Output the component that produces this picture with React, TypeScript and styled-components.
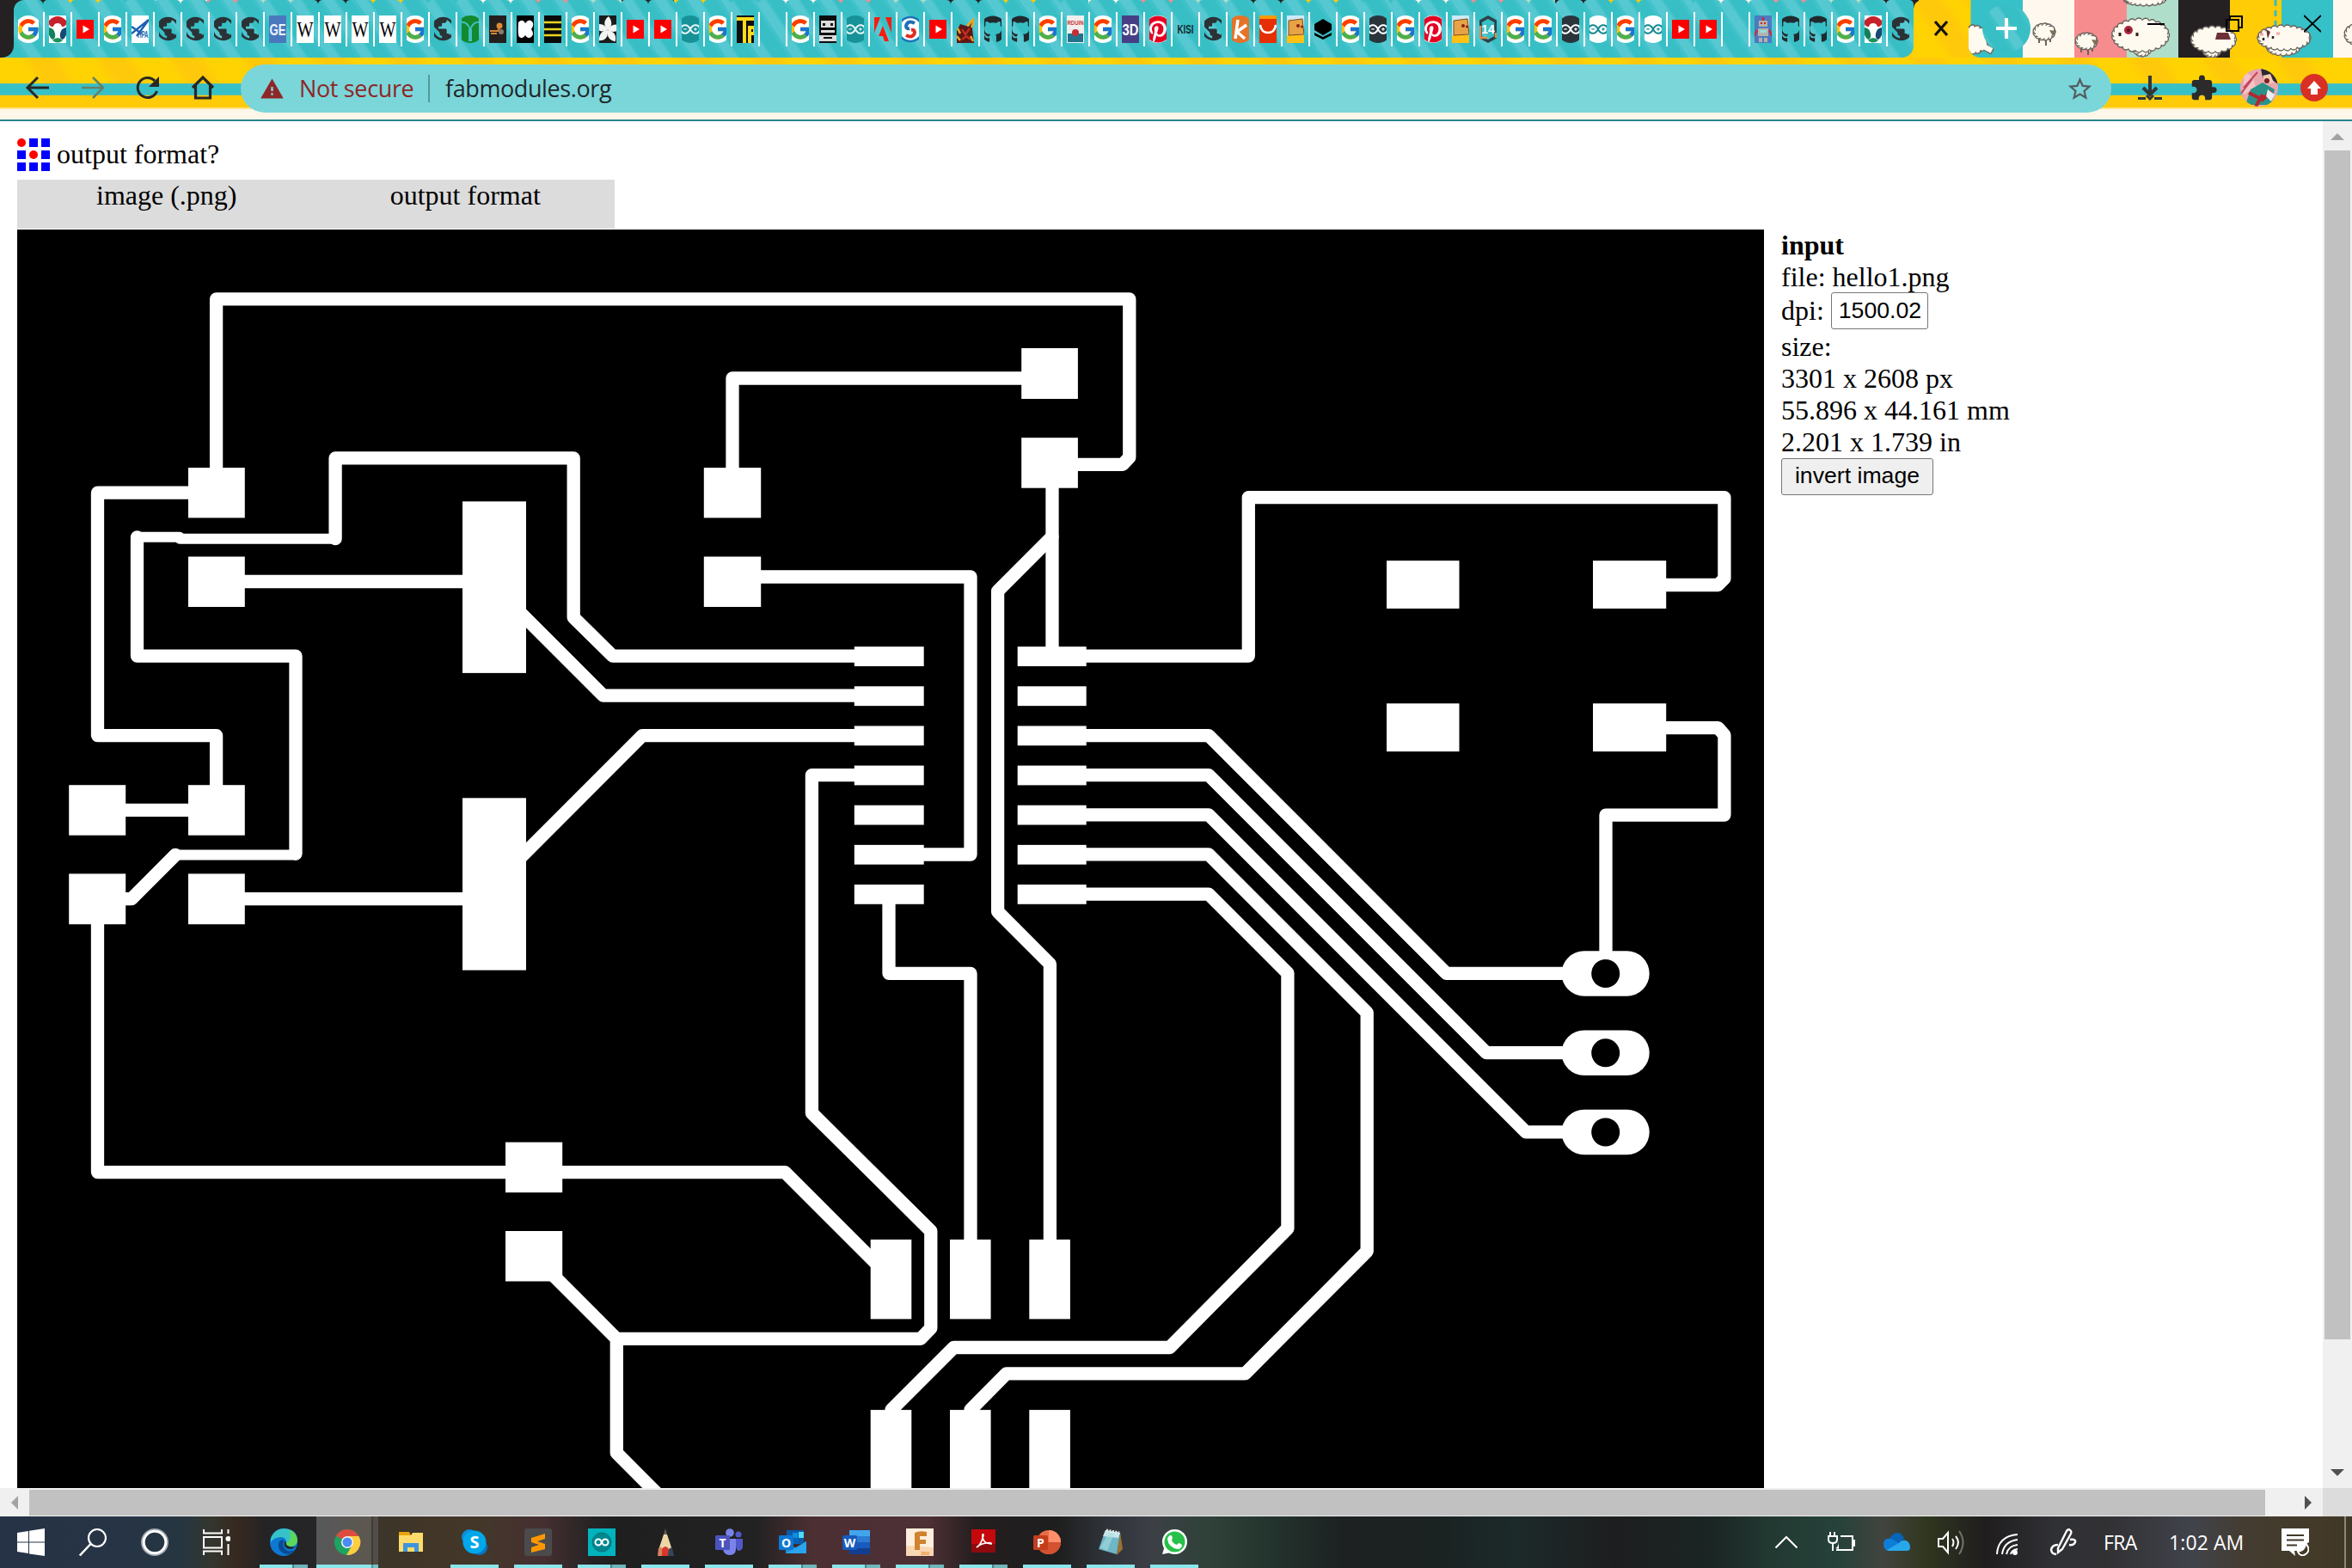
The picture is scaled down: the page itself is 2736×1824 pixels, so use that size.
import React from "react";
import styled, { createGlobalStyle, css } from "styled-components";
import { FcGoogle } from "react-icons/fc";
import { FaGithub, FaPinterest } from "react-icons/fa";
import { MdPublic, MdExtension, MdWarning, MdStarBorder } from "react-icons/md";
import { SiArduino } from "react-icons/si";

const SERIF = '"Liberation Serif", "Times New Roman", serif';
const SANS = '"Liberation Sans", Arial, sans-serif';
const UI = '"Open Sans", "Noto Sans", sans-serif';

const Global = createGlobalStyle`
  html, body { margin: 0; padding: 0; overflow: hidden; background: #fff; }
  * { box-sizing: border-box; }
  svg { display: block; flex: none; }
`;

const tealStripes = css`
  background-color: #3bc1c8;
  background-image: repeating-linear-gradient(
    56deg,
    #37bfc5 0 14px,
    #3fc2c9 16px 18px,
    #56c8d1 20px 29px,
    #45c3ca 31px 32px
  );
  background-attachment: fixed;
`;

const yellowStripes = css`
  background-color: #ffcf04;
  background-image: repeating-linear-gradient(56deg, #ffc90b 0 18px, #ffd302 30px 58px, #ffc90b 70px);
  background-attachment: fixed;
`;

const Screen = styled.div`
  width: 2736px;
  height: 1824px;
  display: flex;
  flex-direction: column;
  overflow: hidden;
`;

/* ---------- browser tab strip ---------- */

const TabStrip = styled.div`
  display: flex;
  height: 67px;
  flex: none;
  background: repeating-linear-gradient(
    90deg,
    #36c0c7 0 60.3px,
    #fef8ef 60.3px 120.6px,
    #f78c8f 120.6px 181px,
    #afdfcb 181px 241.3px,
    #252022 241.3px 301.6px,
    #ffcc05 301.6px 362px
  );
  background-position: -242px 0;
  background-size: 3200px 100%;
`;

const StripEdge = styled.div`
  width: 16px;
  flex: none;
  ${tealStripes}
`;

const StripEdgeShade = styled.div`
  height: 67px;
  background: #252022;
  border-radius: 0 0 14px 0;
`;

const Tab = styled.div<{ $first?: boolean; $last?: boolean }>`
  width: ${(p) => (p.$first ? 34 : 32)}px;
  height: 67px;
  flex: none;
  display: flex;
  align-items: center;
  gap: 5px;
  padding-left: ${(p) => (p.$first ? 5 : 0)}px;
  border-radius: ${(p) => (p.$first ? "12px" : "5px")} 5px ${(p) => (p.$last ? "14px" : "0")} 0;
  ${tealStripes}
`;

const LastTabBacking = styled.div`
  flex: none;
  background: linear-gradient(180deg, transparent 40px, #ffcd07 40px);
`;

const IconClip = styled.div<{ $wide?: boolean }>`
  width: ${(p) => (p.$wide ? 24 : 20)}px;
  height: 32px;
  display: flex;
  justify-content: center;
  overflow: hidden;
`;

const TabGap = styled.div`
  width: 2px;
  height: 40px;
  background: #fff;
`;

const ActiveTab = styled.div`
  width: 64px;
  flex: none;
  height: 67px;
  border-radius: 10px 14px 0 0;
  display: flex;
  align-items: center;
  justify-content: center;
  ${yellowStripes}
`;

const StripRest = styled.div`
  flex: 1;
  position: relative;
  background: #ffcf04;
`;

const ThemeArt = styled.div`
  height: 67px;
  overflow: hidden;
  border-radius: 0 0 0 14px;
  background: linear-gradient(
    90deg,
    #36c0c7 0 63px,
    #fef8ef 63px 123px,
    #f78c8f 123px 184px,
    #afdfcb 184px 244px,
    #252022 244px 304px,
    #ffcc05 304px 364px,
    #36c0c7 364px 424px,
    #fef8ef 424px
  );
`;

const NewTab = styled.div`
  position: absolute;
  left: 16px;
  top: 5px;
  width: 56px;
  height: 56px;
  border-radius: 50%;
  display: flex;
  align-items: center;
  justify-content: center;
  ${tealStripes}
`;

const WindowButtons = styled.div`
  position: absolute;
  right: 36px;
  top: 15px;
  display: flex;
  gap: 71px;
`;

/* ---------- toolbar ---------- */

const Toolbar = styled.div`
  height: 74px;
  flex: none;
  display: flex;
  align-items: center;
  border-bottom: 2px solid #2b858c;
  background:
    linear-gradient(
      180deg,
      transparent 30px,
      #58bdae 30px 31px,
      #38c0c7 31px 43px,
      #6fbf94 43px 44px,
      #ffcb08 44px 58px,
      #ffe38a 58px 60px,
      #fef6e9 60px
    ),
    repeating-linear-gradient(56deg, #ffc90b 0 18px, #ffd302 30px 58px, #ffc90b 70px);
`;

const NavGroup = styled.div`
  display: flex;
  width: 280px;
  flex: none;
  padding: 0 0 2px 28px;
  gap: 32px;
`;

const AddressBar = styled.div`
  width: 2176px;
  height: 56px;
  flex: none;
  border-radius: 28px;
  background: #7bd6d9;
  display: flex;
  align-items: center;
  padding: 0 20px 0 22px;
  font: 27px/56px ${UI};
  color: #20272b;
`;

const NotSecure = styled.span`
  color: #8f2627;
  width: 134px;
  margin-left: 17px;
  letter-spacing: -0.35px;
  white-space: nowrap;
`;

const Divider = styled.span`
  width: 2px;
  height: 32px;
  margin: 0 18px 0 16px;
  background: #57989b;
`;

const Host = styled.span`
  flex: 1;
  letter-spacing: -0.4px;
`;

const Actions = styled.div`
  display: flex;
  align-items: center;
  gap: 26px;
  padding: 0 0 2px 30px;
`;

const DownloadIcon = styled.svg`
  margin-right: 5px;
`;

/* ---------- page ---------- */

const Viewport = styled.div`
  display: grid;
  grid-template: 1590px 33px / 2702px 34px;
  flex: none;
`;

const Page = styled.main`
  overflow: hidden;
  padding: 20px 0 0 20px;
  font: 32px/37px ${SERIF};
  color: #000;
  background: #fff;
`;

const Heading = styled.div`
  display: flex;
  align-items: center;
  gap: 8px;
  height: 38px;
`;

const HeadingText = styled.span`
  padding-bottom: 1px;
`;

const MenuRow = styled.div`
  display: flex;
  width: 695px;
  height: 57px;
  margin-top: 10px;
  background: #dcdcdc;
`;

const MenuCell = styled.div`
  flex: 1;
  text-align: center;
  line-height: 36px;
`;

const Work = styled.div`
  display: flex;
  gap: 20px;
  padding-top: 1px;
`;

const Panel = styled.div`
  white-space: nowrap;
`;

const Line = styled.div`
  height: 37px;
`;

const DpiLine = styled.div`
  display: flex;
  align-items: center;
  gap: 8px;
  height: 43px;
  margin: -1px 0 2px;
`;

const DpiInput = styled.input`
  width: 113px;
  height: 43px;
  border: 1.5px solid #767676;
  border-radius: 3px;
  padding: 0 0 0 8px;
  font: 26.67px ${SANS};
  color: #000;
  background: #fff;
`;

const InvertButton = styled.button`
  display: block;
  width: 177px;
  height: 43px;
  border: 1.5px solid #767676;
  border-radius: 3px;
  padding: 0 0 2px;
  font: 26.67px ${SANS};
  color: #000;
  background: #efefef;
`;

const VScroll = styled.div`
  display: flex;
  flex-direction: column;
  align-items: center;
  background: #f0f0f0;
`;

const VThumb = styled.div`
  width: 30px;
  height: 1383px;
  background: #c1c1c1;
`;

const VEnd = styled.div<{ $h: number; $pad: number }>`
  height: ${(p) => p.$h}px;
  padding-top: ${(p) => p.$pad}px;
`;

const HScroll = styled.div`
  display: flex;
  align-items: center;
  background: #f0f0f0;
`;

const HThumb = styled.div`
  width: 2601px;
  height: 30px;
  background: #c1c1c1;
`;

const HEnd = styled.div<{ $w: number; $pad: number }>`
  width: ${(p) => p.$w}px;
  padding-left: ${(p) => p.$pad}px;
`;

const Corner = styled.div`
  background: #dcdcdc;
`;

/* ---------- taskbar ---------- */

const Taskbar = styled.footer`
  height: 60px;
  flex: none;
  display: flex;
  background: linear-gradient(
    90deg,
    #263346 0, #263445 150px, #263640 212px, #34362f 245px, #36291f 275px, #242325 310px, #252527 365px,
    #3c3529 440px, #413628 500px, #43372a 560px, #462f31 630px, #262324 690px, #1f1f1f 720px, #222222 880px,
    #4c2f33 945px, #4d3035 1080px, #241e1f 1135px, #1e1e1e 1230px, #30343a 1290px, #3c4046 1340px,
    #2e4138 1410px, #23332d 1480px, #1d2122 1560px, #1b2222 1680px, #1c2a2a 1760px, #1d1e1f 1880px, #1b2524 1990px,
    #223932 2060px, #26423a 2140px, #42443f 2190px, #30371f 2240px, #1f1d1e 2310px, #303135 2390px,
    #313134 2450px, #41434b 2550px, #443c31 2610px, #433a28 2700px, #3e3726 2736px
  );
`;

const SysButton = styled.div`
  width: 72px;
  height: 60px;
  flex: none;
  display: flex;
  align-items: center;
  justify-content: center;
`;

const AppButton = styled.div<{ $run?: "one" | "many"; $active?: boolean; $gap?: number }>`
  width: ${(p) => (p.$active ? 72 : 56)}px;
  height: 60px;
  margin-left: ${(p) => p.$gap ?? 18}px;
  display: flex;
  flex-direction: column;
  align-items: center;
  padding-top: 14px;
  gap: 10px;
  flex: none;
  background: ${(p) =>
    p.$active ? "linear-gradient(90deg, #57585a 0, #5d574f 64px, #3f3b38 64px 66px, #524d47 66px)" : "none"};
  &::after {
    content: "";
    width: 100%;
    height: 4px;
    background: ${(p) =>
      p.$run === "many"
        ? p.$active
          ? "linear-gradient(90deg, #8ae6ea 64px, #5c9295 64px 66px, #76c3c7 66px)"
          : "linear-gradient(90deg, #8ae6ea 38px, #4e8083 38px 40px, #6fb5b9 40px)"
        : p.$run === "one"
          ? "#8ae6ea"
          : "transparent"};
  }
`;

const Tray = styled.div`
  margin-left: auto;
  display: flex;
  align-items: center;
  color: #fff;
  font: 23px/60px ${UI};
  white-space: nowrap;
`;

const TraySlot = styled.div<{ $w: number }>`
  width: ${(p) => p.$w}px;
  display: flex;
  justify-content: center;
`;

const TrayText = styled.div<{ $w: number; $sp: number; $lead?: number }>`
  width: ${(p) => p.$w}px;
  margin-left: ${(p) => p.$lead ?? 0}px;
  letter-spacing: ${(p) => p.$sp}px;
`;

const DesktopEdge = styled.div`
  width: 9px;
  height: 60px;
  margin-left: 41px;
  border-left: 2px solid #8b8676;
`;

/* ---------- favicons ---------- */

const Glyph = ({ children }: { children?: React.ReactNode }) => (
  <svg width="32" height="32" viewBox="0 0 32 32">{children}</svg>
);

const IconStack = styled.div<{ $bg: string; $round?: boolean }>`
  width: 32px;
  height: 32px;
  flex: none;
  display: flex;
  align-items: center;
  justify-content: center;
  background: ${(p) => p.$bg};
  border-radius: ${(p) => (p.$round ? "50%" : "0")};
`;

const Letters = ({ bg, fg, size, text, serif, y = 23 }: { bg: string; fg: string; size: number; text: string; serif?: boolean; y?: number }) => (
  <Glyph>
    <rect width="32" height="32" fill={bg} />
    <text
      x="6.500"
      y={y}
      textLength="19"
      lengthAdjust="spacingAndGlyphs"
      fontSize={size}
      fontWeight={serif ? 400 : 700}
      fontFamily={serif ? SERIF : SANS}
      fill={fg}
    >
      {text}
    </text>
  </Glyph>
);

const favicons: Record<string, () => React.ReactElement> = {
  google: () => <IconStack $bg="#fff" $round><FcGoogle size={28} /></IconStack>,
  globe: () => <IconStack $bg="transparent"><MdPublic size={33} color="#2a3236" /></IconStack>,
  github: () => <IconStack $bg="transparent"><FaGithub size={32} color="#20292e" /></IconStack>,
  pin: () => <IconStack $bg="#fff" $round><FaPinterest size={32} color="#e60023" /></IconStack>,
  arduino: () => <IconStack $bg="#179299" $round><SiArduino size={24} color="#e9f6f6" /></IconStack>,
  arduinoDark: () => <IconStack $bg="#2a353b" $round><SiArduino size={24} color="#fff" /></IconStack>,
  arduinoWhite: () => <IconStack $bg="#fff" $round><SiArduino size={24} color="#14888f" /></IconStack>,
  youtube: () => (
    <Glyph>
      <rect x="1" y="5" width="30" height="22" rx="2" fill="#f00" />
      <path d="M13.500 11.500 21 16l-7.500 4.500z" fill="#fff" />
    </Glyph>
  ),
  fab: () => (
    <Glyph>
      <rect width="32" height="32" fill="#fff" />
      <path d="M5 7Q16-5 27 7 26 13 21 13 20 9 16 9 12 9 11 13 6 13 5 7Z" fill="#c8202b" />
      <path d="M6 14q6 1 7 7 1 6-3 7-6-4-4-14z" fill="#12805b" />
      <path d="M26 14q-6 1-7 7-1 6 3 7 6-4 4-14z" fill="#164a73" />
      <path d="M10 29q6-6 12 0-6 5-12 0z" fill="#19945f" />
    </Glyph>
  ),
  hpa: () => (
    <Glyph>
      <rect width="32" height="32" fill="#fff" />
      <path d="M6 21 26 5 12 24M6 13l12 8" stroke="#1e5fb4" strokeWidth="2.500" fill="none" />
      <text x="13" y="26" textLength="12.500" lengthAdjust="spacingAndGlyphs" fontSize="11" fontWeight="700" fontFamily={SANS} fill="#2265ad">HPA</text>
    </Glyph>
  ),
  ge: () => <Letters bg="#4a78bd" fg="#eef4ff" size={18} text="GE" />,
  wiki: () => <Letters bg="#fff" fg="#000" size={26} text="W" serif y={25} />,
  vine: () => (
    <Glyph>
      <circle cx="16" cy="16" r="16" fill="#12892e" />
      <path d="M4 8q9-2 12 9 3-11 12-9M15 16v14M17 16v14" stroke="#41bfc0" strokeWidth="2" fill="none" />
    </Glyph>
  ),
  ember: () => (
    <Glyph>
      <rect width="32" height="32" fill="#241f1e" />
      <path d="M7 18h9l3-5M8 21h7" stroke="#d88631" strokeWidth="2" fill="none" />
      <circle cx="18" cy="12" r="3.500" fill="#d98a35" />
      <circle cx="20" cy="19" r="3" fill="#8a7a72" />
    </Glyph>
  ),
  kick: () => (
    <Glyph>
      <rect width="32" height="32" fill="#000" />
      <path d="M8 8q5-5 8 1 4-6 8-2 3 4-1 9 4 6 0 9-4 3-7-2-3 5-7 2-2-2-1-17z" fill="#fff" />
    </Glyph>
  ),
  lines: () => (
    <Glyph>
      <rect width="32" height="32" fill="#0a0a0a" />
      <path d="M0 8h32M0 16h32M0 23h32" stroke="#ecd51f" strokeWidth="2.500" />
    </Glyph>
  ),
  flower: () => (
    <Glyph>
      <rect width="32" height="32" fill="#1b1b1b" />
      {[0, 72, 144, 216, 288].map((a) => (
        <path key={a} d="M16 17Q8 8 17 1 24 10 16 17z" fill="#f4f4f4" transform={`rotate(${a} 16 17)`} />
      ))}
    </Glyph>
  ),
  tr: () => (
    <Glyph>
      <rect width="32" height="32" fill="#0d0d0d" />
      <path d="M6 4h22M15 4v28M21 32V14h6v7h-6" stroke="#ffd91a" strokeWidth="4" fill="none" />
    </Glyph>
  ),
  blank: () => <Glyph />,
  mono: () => (
    <Glyph>
      <rect width="32" height="32" fill="#0d0d0d" />
      <path d="M8 6h16v8H8zM8 17h16v3H8zM6 23h20v7H6z" fill="#dcdcdc" />
      <path d="M10 9h3v3h-3zM19 9h3v3h-3zM11 25h10v2H11z" fill="#111" />
    </Glyph>
  ),
  adobe: () => (
    <Glyph>
      <path d="M3 2h10L3 28zM19 2h10v26zM16 12l7 18h-5l-2-6h-5z" fill="#fa1b0f" />
    </Glyph>
  ),
  cycle: () => (
    <Glyph>
      <circle cx="16" cy="16" r="14" fill="#fff" stroke="#1a75b8" strokeWidth="2.500" />
      <path d="M21 9q-8-4-10 3 0 4 4 3" fill="none" stroke="#1d6fb3" strokeWidth="4" />
      <path d="M11 23q8 4 10-3 0-4-4-3" fill="none" stroke="#e22b20" strokeWidth="4" />
    </Glyph>
  ),
  warrior: () => (
    <Glyph>
      <path d="M6 32V18l4-8 10 3 7-10-3 12 2 17z" fill="#5d1715" />
      <path d="M18 12 27 3l-4 11M6 24l4 5M22 24l3 6M7 15l3 6" stroke="#f0a51d" strokeWidth="2.500" fill="none" />
      <path d="M12 16l4 6 5-7M12 28l5-4 5 4" stroke="#c22b1d" strokeWidth="2.500" fill="none" />
    </Glyph>
  ),
  book: () => (
    <Glyph>
      <rect width="32" height="32" fill="#f1efed" />
      <text x="6.500" y="11" textLength="19" lengthAdjust="spacingAndGlyphs" fontSize="8" fontWeight="700" fontFamily={SANS} fill="#cb3434">RDUIN</text>
      <path d="M7 21h18v10H7z" fill="#22728c" />
      <circle cx="16" cy="20" r="4" fill="#c52d35" />
    </Glyph>
  ),
  threeD: () => <Letters bg="#473f86" fg="#fff" size={19} text="3D" />,
  kisi: () => <Letters bg="transparent" fg="#15272b" size={14} text="KISI" y={21} />,
  keen: () => (
    <Glyph>
      <circle cx="16" cy="16" r="16" fill="#e5732a" />
      <path d="M13 5 10 27M23 11 12 19l9 8" stroke="#fff" strokeWidth="3.500" fill="none" />
    </Glyph>
  ),
  cart: () => (
    <Glyph>
      <rect width="32" height="32" fill="#e62e04" />
      <rect width="32" height="4" fill="#ff9a00" />
      <path d="M7 11q1 9 9 9t9-9" stroke="#fff" strokeWidth="2.500" fill="none" />
    </Glyph>
  ),
  box: () => (
    <Glyph>
      <rect width="32" height="32" fill="#cfe9f6" />
      <path d="M6 23h20v9H6z" fill="#ffc013" />
      <path d="M8 6 24 4l2 18-18 1z" fill="#e8a347" stroke="#7a4a17" />
      <circle cx="19" cy="12" r="2" fill="#8b1e14" /><circle cx="23.500" cy="13" r="1.500" fill="#8b1e14" />
    </Glyph>
  ),
  layers: () => (
    <Glyph>
      <path d="m16 4 10 6v7l-10 6-10-6v-7z" fill="#000" />
      <path d="m6 20 10 5 10-5v3l-10 5-10-5z" fill="#000" />
    </Glyph>
  ),
  fourteen: () => (
    <Glyph>
      <path d="m16 2 9 5v18l-9 5-9-5V7z" fill="none" stroke="#2c4248" strokeWidth="3.500" />
      <path d="M7 12v14h8M25 20v6" stroke="#e38b48" strokeWidth="2.500" fill="none" />
      <text x="16" y="21" textAnchor="middle" fontSize="14" fontWeight="700" fontFamily={SANS} fill="#fff">14</text>
    </Glyph>
  ),
  robot: () => (
    <Glyph>
      <rect width="32" height="32" fill="#4c7bc0" />
      <path d="M16 2v5M9 17l-4 8M23 17l4 8" stroke="#cf2742" strokeWidth="2.500" />
      <path d="M11 6h10v7H11zM10 15h12v9H10zM11 26h4v5h-4zM17 26h4v5h-4z" fill="#b6b1ab" />
      <path d="M13 8h2v2h-2zM17 8h2v2h-2z" fill="#c22" /><path d="M12 17h8v3h-8z" fill="#8fe0dd" />
    </Glyph>
  ),
};

const tabs = (
  "google fab youtube google hpa globe globe globe globe ge wiki wiki wiki wiki google globe vine ember kick lines " +
  "google flower youtube youtube arduino google tr blank google mono arduino adobe cycle youtube warrior github github " +
  "google book google threeD pin kisi globe keen cart box layers google arduinoDark google pin box fourteen google google " +
  "arduinoDark arduinoWhite google arduinoWhite youtube youtube blank robot github github google fab globe"
).split(" ");

/* ---------- theme sheep ---------- */

const Sheep = ({ x, y, w, h, face }: { x: number; y: number; w: number; h: number; face?: React.ReactNode }) => {
  const n = Math.round(w / 4) + 6;
  const puffs = Array.from({ length: n }, (_, i) => {
    const a = (i / n) * Math.PI * 2;
    return [x + Math.cos(a) * (w / 2 - 4), y + Math.sin(a) * (h / 2 - 4)];
  });
  return (
    <g>
      {puffs.map(([cx, cy], i) => <circle key={i} cx={cx} cy={cy} r="4" fill="#fefaf0" stroke="#6b645d" strokeWidth="1.500" />)}
      <ellipse cx={x} cy={y} rx={w / 2 - 2.500} ry={h / 2 - 2.500} fill="#fefaf0" />
      {face}
    </g>
  );
};

const SheepArt = () => (
  <svg width="446" height="67" viewBox="2290 0 446 67">
    <path d="M2290 0h2.500v67h-2.500z" fill="#ffcf04" />
    <path d="M2647 0v34" stroke="#38bcc0" strokeWidth="3" strokeDasharray="7 5" />
    <path d="M2300 50l18 10" stroke="#6b645d" strokeWidth="8" />
    <Sheep x={2296} y={46} w={34} h={34} />
    <path d="M2300 50l17 9" stroke="#fefaf0" strokeWidth="6" />
    {[[2378, 39], [2427, 50]].map(([x, y]) => (
      <g key={x}>
        <path d={`M${x - 6} ${y + 5}v6M${x + 2} ${y + 5}v9M${x + 7} ${y + 4}v6`} stroke="#6b645d" strokeWidth="2" />
        <Sheep x={x} y={y - 2} w={26} h={20} face={<path d={`M${x + 6} ${y - 4}l8 1-4 6z`} fill="#7c6d58" />} />
      </g>
    ))}
    <Sheep x={2495} y={-2} w={50} h={18} />
    <Sheep x={2492} y={56} w={22} h={20} />
    <Sheep x={2490} y={41} w={67} h={40} face={<><path d="M2485 52h14v6h-14z" fill="#fefaf0" /><circle cx="2476" cy="35" r="5" fill="#a92639" /><circle cx="2476" cy="35" r="2" fill="#541420" /><path d="M2466 38v4M2486 38v4" stroke="#322" strokeWidth="3" /></>} />
    <Sheep x={2573} y={58} w={22} h={18} />
    <Sheep x={2575} y={46} w={53} h={32} face={<><path d="M2564 50h18v8h-18z" fill="#fefaf0" /><path d="M2579 38h13l3 8h-18z" fill="#6e3038" /></>} />
    <Sheep x={2656} y={54} w={40} h={22} />
    <Sheep x={2657} y={44} w={62} h={30} face={<><path d="M2640 46h32v8h-32z" fill="#fefaf0" /><path d="M2636 34l5 3-3 8z" fill="#6e3038" /><path d="M2629 40h4M2648 39h4" stroke="#f6a6a4" strokeWidth="3" /><path d="M2633 44v3M2644 42v3" stroke="#322" strokeWidth="2.500" /></>} />
    <Sheep x={2740} y={40} w={26} h={24} />
  </svg>
);

/* ---------- circuit board traces ---------- */

type Box = [number, number, number, number];

const pads: Box[] = [
  [219, 544.1, 65.8, 58.3], [219, 647.5, 65.8, 58.5], [818.8, 544.1, 66.4, 58.3], [818.8, 647.5, 66.4, 58.5],
  [538, 583.3, 74, 199.6], [538, 928.3, 74, 200.3],
  [80.2, 913.2, 66, 58.5], [219, 913.2, 65.8, 58.5], [80.2, 1016.4, 66, 58.8], [219, 1016.4, 65.8, 58.8],
  [588, 1328.7, 66.2, 58.5], [588, 1432, 66.2, 58.5],
  [1188.2, 405, 65.7, 59], [1188.2, 509.2, 65.7, 58.5],
  [1613, 652.2, 84.5, 55.7], [1853, 652.2, 85.2, 55.7], [1613, 818.3, 84.5, 55.9], [1853, 818.3, 85.2, 55.9],
  ...[1012.7, 1105, 1197.3].flatMap((x): Box[] => [[x, 1441.9, 47.6, 92.5], [x, 1640.1, 47.6, 100]]),
  ...[0, 1, 2, 3, 4, 5, 6].flatMap((i): Box[] => [
    [993.8, 752.2 + 46.13 * i, 80.9, 22.8],
    [1183.7, 752.2 + 46.13 * i, 80, 22.8],
  ]),
];

const traces = [
  "251.6,560 251.6,347.8 1313.8,347.8 1313.8,532 1306,540.3 1240,540.3",
  "230,573.1 113.5,573.1 113.5,855.6 251.6,855.6 251.6,930",
  "390.1,626.7 390.1,532.8 667.2,532.8 667.2,718.3 712.8,763.1 1000,763.1",
  "159.5,624.8 159.5,763.1 344,763.1 344,993",
  "204,994.5 153,1045.7 130,1045.7",
  "270,676.5 560,676.5",
  "130,942.4 240,942.4",
  "270,1045.7 560,1045.7",
  "852,560 852,440 1200,440",
  "870,671 1129,671 1129,994 1060,994",
  "595,702.4 701.7,809.1 1000,809.1",
  "600,1003 747.2,855.6 1000,855.6",
  "1000,901.6 944.4,901.6 944.4,1294.7 1082.8,1432 1082.8,1545 1071,1557.3 717.3,1557.3",
  "635,1475 717.3,1557.3 717.3,1690.2 790,1763",
  "113.5,1060 113.5,1363.6 913.1,1363.6 1027,1477.5",
  "1034,1040 1034,1132.3 1129,1132.3 1129,1450",
  "1224,560 1224,760",
  "1224,624.2 1160.6,687.6 1160.6,1060.5 1221.4,1121.3 1221.4,1450",
  "1250,763.1 1452.3,763.1 1452.3,578.6 2005.9,578.6 2005.9,673 1998.5,680.5 1930,680.5",
  "1930,846.6 1998.5,846.6 2005.9,855 2005.9,948.1 1868,948.1 1868,1115",
  "1250,855.6 1406,855.6 1682.6,1132.3 1830,1132.3",
  "1250,901.7 1406,901.7 1729,1224.7 1830,1224.7",
  "1250,947.8 1406,947.8 1775,1316.9 1830,1316.9",
  "1250,993.9 1406,993.9 1590.2,1178 1590.2,1455.5 1448.4,1597.9 1170.7,1597.9 1129,1640",
  "1250,1040.1 1406,1040.1 1497.9,1132 1497.9,1429 1360.6,1567.5 1109.5,1567.5 1037,1640",
];

const Board = () => (
  <svg width="2032" height="1464" viewBox="20 267 2032 1464">
    <rect x="20" y="267" width="2032" height="1464" fill="#000" />
    <g fill="none" stroke="#fff" strokeLinejoin="round" strokeLinecap="round" strokeWidth="15.300">
      {traces.map((t) => <polyline key={t} points={t} />)}
      <path d="M159.500 624.800H209M209 626.700H390M344 994.500H204" strokeWidth="12" />
    </g>
    {pads.map(([x, y, w, h]) => <rect key={`${x}-${y}`} x={x} y={y} width={w} height={h} fill="#fff" />)}
    {[1132.5, 1224.8, 1317].map((y) => (
      <g key={y}>
        <rect x="1816.500" y={y - 26.2} width="102.200" height="52.400" rx="26.200" fill="#fff" />
        <circle cx="1867.700" cy={y} r="16.500" fill="#000" />
      </g>
    ))}
  </svg>
);

/* ---------- taskbar artwork ---------- */

const OfficeTile = ({ color, letter }: { color: string; letter: string }) => (
  <>
    <rect x="0" y="8" width="17" height="17" rx="1.500" fill={color} />
    <text x="8.500" y="21.500" textAnchor="middle" fontSize="14" fontWeight="700" fontFamily={UI} fill="#fff">{letter}</text>
  </>
);

const apps: { name: string; run?: "one" | "many"; active?: boolean; gap?: number; art: React.ReactNode }[] = [
  { name: "edge", run: "many", gap: 14, art: <>
    <circle cx="16" cy="16" r="16" fill="#0c78d0" />
    <path d="M1 12Q5 0 17 0q14 1 15 13 0 8-8 8-6 0-5-4 1-6-6-7Q5 10 1 16z" fill="#36c2c9" />
    <path d="M22 2q10 4 10 12-1 7-8 7-6 0-5-4 8-4 3-15z" fill="#5dd858" />
    <path d="M10 18q-1 11 12 12 4-1 7-5-9 4-13-3-2-5 1-8-6-2-7 4z" fill="#0b4a94" />
    <path d="M17 15q-2 9 8 9l6-3q-3 1-8 0-5-1-4-5z" fill="#26292e" /></> },
  { name: "chrome", run: "many", active: true, gap: 10, art: <>
    <circle cx="16" cy="16" r="15" fill="#1ea362" />
    <path d="M16 16 3 8.500A15 15 0 0 1 29 8.500L29.700 10H16z" fill="#dd4b3e" />
    <path d="M16 9h13.500A15 15 0 0 1 15 31l7-12z" fill="#ffcd40" />
    <circle cx="16" cy="16" r="7" fill="#f5f5f5" /><circle cx="16" cy="16" r="5.500" fill="#4a8af4" /></> },
  { name: "files", gap: 10, art: <>
    <path d="M2 4h12l2 4h14v19H2z" fill="#e8a409" /><path d="M2 8h14l2-3h12v22H2z" fill="#ffdb6b" />
    <path d="M7 27V17h18v10h-5v-5h-8v5z" fill="#3f94dc" /></> },
  { name: "skype", run: "one", art: <>
    <circle cx="10" cy="10" r="9" fill="#0a8fd8" /><circle cx="22" cy="22" r="9" fill="#0675c4" /><circle cx="16" cy="16" r="13.500" fill="#00a8ea" />
    <text x="16" y="23" textAnchor="middle" fontSize="20" fontWeight="700" fontFamily={UI} fill="#fff">S</text></> },
  { name: "sublime", run: "one", art: <>
    <rect width="32" height="32" rx="3" fill="#4b4b4b" />
    <path d="M8 11 24 6v6l-9 3 9 3v6L8 28v-6l9-3-9-3z" fill="#ff9800" /></> },
  { name: "arduino", run: "many", art: <>
    <rect width="32" height="32" fill="#00b3bd" /><circle cx="16" cy="16" r="11" fill="#00878f" stroke="#0b7279" />
    <g fill="none" stroke="#fff" strokeWidth="2"><circle cx="12" cy="16" r="3.500" /><circle cx="20" cy="16" r="3.500" /></g></> },
  { name: "pencil", run: "one", art: <>
    <path d="M16 0l2 7h-4z" fill="#6b5a5c" /><path d="M14 7h4l6 18H8z" fill="#efd6a6" />
    <path d="M7 32l1-9q3-3 5 1v8z" fill="#d9825c" /><path d="M12 32v-8q4-6 8 0v8z" fill="#d7382c" /><path d="M19 32l1-8q3-3 4-1l2 9z" fill="#33475c" /></> },
  { name: "teams", run: "one", art: <>
    <circle cx="27" cy="7" r="3.500" fill="#5059c9" /><path d="M20 12h12v9q0 5-6 5z" fill="#5059c9" />
    <circle cx="17" cy="5" r="4.800" fill="#7b83eb" /><path d="M9 12h15v12q0 7-7 7t-8-7z" fill="#7b83eb" />
    <OfficeTile color="#4b53bc" letter="T" /></> },
  { name: "outlook", run: "many", art: <>
    <path d="M9 2h20v16H9z" fill="#0a5bab" /><path d="M16 5h6v6h-6z" fill="#0f8ee0" /><path d="M23 4h6v7h-6z" fill="#50d9ff" /><path d="M16 11h7v7h-7z" fill="#0364b8" />
    <path d="M8 15l12 8 12-8v14H8z" fill="#1a8fe0" /><path d="M8 29l24-14v14z" fill="#2aa4ee" />
    <OfficeTile color="#0f78d4" letter="O" /></> },
  { name: "word", run: "many", art: <>
    <path d="M8 2h24v8H8z" fill="#41a5ee" /><path d="M8 9h24v7H8z" fill="#2b7cd3" /><path d="M8 16h24v7H8z" fill="#185abd" /><path d="M8 23h24v7H8z" fill="#103f91" />
    <OfficeTile color="#185abd" letter="W" /></> },
  { name: "fusion", run: "many", art: <>
    <rect width="32" height="32" fill="#fdeedd" /><path d="M0 20l32 2v10H0z" fill="#f9d7b3" />
    <path d="M10 5q6-3 14-1v5h-8v4h7v5h-7v7h-6z" fill="#d1822d" />
    <text x="22" y="30.500" textAnchor="middle" fontSize="6" fontWeight="700" fontFamily={SANS} fill="#e9912f">360</text></> },
  { name: "acrobat", run: "many", art: <>
    <rect x="2" y="1" width="28" height="27" fill="#c5080c" /><path d="M2 18h28v10H2z" fill="#8e0a0c" />
    <path d="M8 22q5-2 8-14 0-2-1-1-1 10 10 11 1-2-6-1-7 1-11 5z" fill="none" stroke="#fff" strokeWidth="1.700" /></> },
  { name: "powerpoint", run: "one", art: <>
    <circle cx="18" cy="16" r="14" fill="#ed6c47" /><path d="M18 2a14 14 0 0 1 14 14H18z" fill="#ff8f6b" /><path d="M4 16h28a14 14 0 0 1-28 0z" fill="#d35230" />
    <OfficeTile color="#c43e1c" letter="P" /></> },
  { name: "notepad", run: "one", art: <>
    <path d="M27 4l3 20-7 7z" fill="#9a7333" /><path d="M10 2 27 5 23 30 2 24z" fill="#6fb7c4" /><path d="M10 2 27 5l-2 6L7 9z" fill="#c7e6ea" />
    <path d="M4 22l10-17 6 1-8 20z" fill="#a9dce2" opacity="0.6" /><path d="M11 2l15 3" stroke="#e8e8e8" strokeWidth="3" strokeDasharray="2 1.500" /></> },
  { name: "whatsapp", run: "one", art: <>
    <circle cx="16.500" cy="15.500" r="14.500" fill="#fff" /><path d="M2 30l3-10 7 8z" fill="#fff" /><circle cx="16.500" cy="15.500" r="12" fill="#27c04a" />
    <path d="M11 8q2-1 3 3l-1 3q2 4 6 5l2-2q4 1 4 3-1 4-5 4-11-2-12-12 1-3 3-4z" fill="#fff" /></> },
];

export default function App() {
  return (
    <Screen>
      <Global />
      <TabStrip>
        <StripEdge><StripEdgeShade /></StripEdge>
        {tabs.slice(0, -1).map((t, i) => {
          const Icon = favicons[t];
          return (
            <Tab key={i} $first={i === 0}>
              {i > 0 && <TabGap />}
              <IconClip $wide={i === 0}><Icon /></IconClip>
            </Tab>
          );
        })}
        <LastTabBacking>
          <Tab $last>
            <TabGap />
            <IconClip>{favicons.globe()}</IconClip>
          </Tab>
        </LastTabBacking>
        <ActiveTab>
          <svg width="18" height="22" viewBox="0 0 18 22"><path d="M2 2l14 16M16 2 2 18" stroke="#131313" strokeWidth="3.200" /></svg>
        </ActiveTab>
        <StripRest>
          <ThemeArt><SheepArt /></ThemeArt>
          <NewTab>
            <svg width="24" height="24" viewBox="0 0 24 24"><path d="M12 0v24M0 12h24" stroke="#fff" strokeWidth="4" /></svg>
          </NewTab>
          <WindowButtons>
            <svg width="20" height="24" viewBox="0 0 20 24"><path d="M0 13h20" stroke="#000" strokeWidth="2" /></svg>
            <svg width="20" height="24" viewBox="0 0 20 24"><path d="M1 8h14v13H1zM5 8V4h14v13h-4" fill="none" stroke="#000" strokeWidth="2" /></svg>
            <svg width="20" height="24" viewBox="0 0 20 24"><path d="M0 3l20 19M20 3 0 22" stroke="#000" strokeWidth="1.800" /></svg>
          </WindowButtons>
        </StripRest>
      </TabStrip>

      <Toolbar>
        <NavGroup>
          <svg width="32" height="32" viewBox="0 0 32 32"><path d="M29 16H5M16 4 4 16l12 12" stroke="#272727" strokeWidth="3" fill="none" /></svg>
          <svg width="32" height="32" viewBox="0 0 32 32"><path d="M3 16h24M16 4l12 12-12 12" stroke="#64816a" strokeWidth="2.500" fill="none" /></svg>
          <svg width="32" height="32" viewBox="0 0 32 32"><path d="M26.500 20A11.500 11.500 0 1 1 24 8" stroke="#272727" strokeWidth="3" fill="none" /><path d="M29 3v12H17z" fill="#272727" /></svg>
          <svg width="32" height="32" viewBox="0 0 32 32"><path d="M4 16 16 4l12 12M7.500 13.500v14.500h17V13.500" stroke="#272727" strokeWidth="3.200" fill="none" /></svg>
        </NavGroup>
        <AddressBar>
          <MdWarning size={29} color="#8f2627" />
          <NotSecure>Not secure</NotSecure>
          <Divider />
          <Host>fabmodules.org</Host>
          <MdStarBorder size={33} color="#525d60" />
        </AddressBar>
        <Actions>
          <DownloadIcon width="30" height="30" viewBox="0 0 30 30"><path d="M15 1v22M7 15l8 8 8-8" stroke="#32373a" strokeWidth="4" fill="none" /><path d="M1 27.500h9M20 27.500h9M11 24l4 4 4-4" stroke="#32373a" strokeWidth="3" fill="none" /></DownloadIcon>
          <MdExtension size={33} color="#2b2b2b" />
          <svg width="44" height="44" viewBox="0 0 44 44">
            <defs><clipPath id="avatar"><circle cx="22" cy="22" r="22" /></clipPath></defs>
            <g clipPath="url(#avatar)">
              <rect width="44" height="44" fill="#e8a6ad" />
              <path d="M4 4q12 2 14 18L4 30z" fill="#f3c3c6" />
              <path d="M4 22 20 4M0 30 14 12" stroke="#c6465f" strokeWidth="2" />
              <path d="M24 0h18l2 18-8-6-10-2z" fill="#2a2a30" />
              <path d="M26 8l9-2 4 10-9 2z" fill="#f4c9b5" /><circle cx="31" cy="14" r="3" fill="#7d222b" />
              <path d="M12 24l14-8 14 8-4 18H6z" fill="#2a9389" />
              <path d="M10 28l16 8 10-10M18 44l8-14" stroke="#b5262f" strokeWidth="4" fill="none" />
              <path d="M32 24l8 6-4 8-6-6z" fill="#e9eeee" />
            </g>
          </svg>
          <svg width="32" height="32" viewBox="0 0 32 32"><circle cx="16" cy="16" r="16" fill="#d93025" /><path d="m16 8 8 9h-4v7h-8v-7H8z" fill="#fff" /></svg>
        </Actions>
      </Toolbar>

      <Viewport>
        <Page>
          <Heading>
            <svg width="38" height="38" viewBox="0 0 38 38">
              {[0, 1, 2].flatMap((r) => [0, 1, 2].map((c) =>
                (r === 0 && c === 0) || (r === 1 && c === 1)
                  ? <circle key={`${r}${c}`} cx={5 + 14 * c} cy={5 + 14 * r} r="5" fill="#f00" />
                  : <rect key={`${r}${c}`} x={14 * c} y={14 * r} width="10" height="10" fill="#00f" />
              ))}
            </svg>
            <HeadingText>output format?</HeadingText>
          </Heading>
          <MenuRow>
            <MenuCell>image (.png)</MenuCell>
            <MenuCell>output format</MenuCell>
          </MenuRow>
          <Work>
            <Board />
            <Panel>
              <Line><b>input</b></Line>
              <Line>file: hello1.png</Line>
              <DpiLine>dpi: <DpiInput defaultValue="1500.02" /></DpiLine>
              <Line>size:</Line>
              <Line>3301 x 2608 px</Line>
              <Line>55.896 x 44.161 mm</Line>
              <Line>2.201 x 1.739 in</Line>
              <InvertButton>invert image</InvertButton>
            </Panel>
          </Work>
        </Page>
        <VScroll>
          <VEnd $h={34} $pad={14}><svg width="16" height="8" viewBox="0 0 16 8"><path d="M8 0l8 8H0z" fill="#a3a3a3" /></svg></VEnd>
          <VThumb />
          <VEnd $h={173} $pad={151}><svg width="16" height="8" viewBox="0 0 16 8"><path d="M0 0h16L8 8z" fill="#505050" /></svg></VEnd>
        </VScroll>
        <HScroll>
          <HEnd $w={34} $pad={13}><svg width="8" height="16" viewBox="0 0 8 16"><path d="M8 0v16L0 8z" fill="#a3a3a3" /></svg></HEnd>
          <HThumb />
          <HEnd $w={67} $pad={46}><svg width="8" height="16" viewBox="0 0 8 16"><path d="M0 0l8 8-8 8z" fill="#505050" /></svg></HEnd>
        </HScroll>
        <Corner />
      </Viewport>

      <Taskbar>
        <SysButton><Glyph><path d="M0 5l13-2v12.500H0zM14 2.700 32 0v15.500H14zM0 16.500h13V29L0 27zM14 16.500h18V32l-18-2.500z" fill="#fff" /></Glyph></SysButton>
        <SysButton><Glyph><circle cx="21" cy="11" r="10" fill="none" stroke="#fff" strokeWidth="2.200" /><path d="M13.500 18 .8 31.500" stroke="#fff" strokeWidth="2.500" /></Glyph></SysButton>
        <SysButton><Glyph><circle cx="16" cy="16" r="14.500" fill="none" stroke="#a2a8b0" strokeWidth="3" /><circle cx="16" cy="16" r="12.800" fill="none" stroke="#fff" strokeWidth="3" /></Glyph></SysButton>
        <SysButton><Glyph><path d="M1 1v4.500h21V1M1 31v-4.500h21V31M1 10h21v12.500H1zM29.500 1v5M29.500 18v13" fill="none" stroke="#fff" strokeWidth="2" /><circle cx="29.500" cy="12" r="3" fill="#fff" /></Glyph></SysButton>
        {apps.map((a) => (
          <AppButton key={a.name} $run={a.run} $active={a.active} $gap={a.gap}><Glyph>{a.art}</Glyph></AppButton>
        ))}
        <Tray>
          <TraySlot $w={64}><svg width="28" height="16" viewBox="0 0 28 16"><path d="M1.500 14.500 14 2l12.500 12.500" fill="none" stroke="#fff" strokeWidth="2" /></svg></TraySlot>
          <TraySlot $w={64}><Glyph><path d="M3 4v5M8 4v5M1 9h10v4q0 4-5 4t-5-4zM6 17v9M15 9h14v16H10M29 14h2v6h-2" fill="none" stroke="#fff" strokeWidth="2" /><path d="M9 23q4-1 4-9v10z" fill="#fff" /></Glyph></TraySlot>
          <TraySlot $w={64}><Glyph><path d="M8 12q3-7 9-7t8 7l-9 8-10-4z" fill="#0664b9" /><path d="M1 17q1-6 9-5l14 8-16 6H6q-5-1-5-9z" fill="#0f7ed7" /><path d="M5 25l14-8q3-4 8-3 5 2 5 8 0 4-4 4H8q-2 0-3-1z" fill="#28a8ea" /></Glyph></TraySlot>
          <TraySlot $w={64}><Glyph><path d="M1 12h5l6-7v23l-6-7H1z" fill="none" stroke="#fff" strokeWidth="2" /><path d="M17 12q3 4 0 9M21 9q6 7 0 15" fill="none" stroke="#fff" strokeWidth="2" /><path d="M25 3q9 13 0 27" fill="none" stroke="#76736a" strokeWidth="2" /></Glyph></TraySlot>
          <TraySlot $w={66}><Glyph><path d="M4 30Q5 9 28 7M10 30q2-15 18-17M15 30q2-10 13-11M20 30q1-5 8-6" fill="none" stroke="#fff" strokeWidth="2" /><circle cx="25" cy="28" r="3" fill="#fff" /></Glyph></TraySlot>
          <TraySlot $w={64}><Glyph><path d="M10 23 20 3q2-3 4-1 2 1 1 4L15 24l-5 4z" fill="none" stroke="#fff" strokeWidth="2.400" /><path d="M10 19q-7 0-8 6 1 5 6 5M24 13q7-1 6 3-2 4-7 3" fill="none" stroke="#fff" strokeWidth="2.400" /></Glyph></TraySlot>
          <TrayText $w={76} $sp={-0.6} $lead={15}>FRA</TrayText>
          <TrayText $w={131} $sp={0.1}>1:02 AM</TrayText>
          <TraySlot $w={32}><Glyph><path d="M0 0h32v16q-6 3-7 10H15l1 6-7-6H0z" fill="#fff" /><path d="M6 8h20M6 13.500h20M6 19.500h12" stroke="#41392a" strokeWidth="2" /><path d="M28 18q-1 8-9 9 2 5 7 4 7-3 5-9-1-3-3-4z" fill="none" stroke="#fff" strokeWidth="2" /></Glyph></TraySlot>
          <DesktopEdge />
        </Tray>
      </Taskbar>
    </Screen>
  );
}
